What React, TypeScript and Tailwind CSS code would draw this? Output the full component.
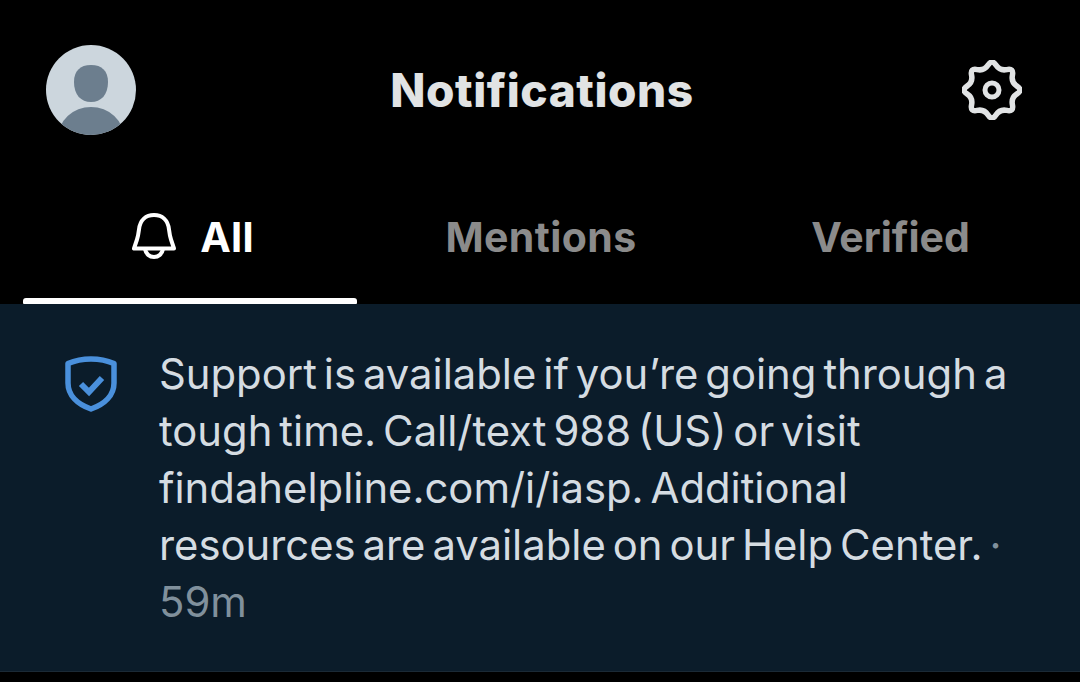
const gearPath = (() => {
  const pts = Array.from({ length: 16 }, (_, i) => {
    const a = (i * Math.PI) / 8 - Math.PI / 2;
    const r = i % 2 === 0 ? 31 : 20.5;
    return [30 + r * Math.cos(a), 30 + r * Math.sin(a)];
  });
  const mid = (p: number[], q: number[]) => [(p[0] + q[0]) / 2, (p[1] + q[1]) / 2];
  const start = mid(pts[15], pts[0]);
  let d = `M${start[0].toFixed(2)} ${start[1].toFixed(2)}`;
  pts.forEach((p, i) => {
    const m = mid(p, pts[(i + 1) % 16]);
    d += `Q${p[0].toFixed(2)} ${p[1].toFixed(2)} ${m[0].toFixed(2)} ${m[1].toFixed(2)}`;
  });
  return d + "Z";
})();

export default function App() {
  return (
    <div className="w-[1080px] h-[682px] overflow-hidden bg-black flex flex-col font-['Inter','Liberation_Sans',sans-serif]">
      <header className="h-[180px] pl-[46px] pr-[58px] flex items-center justify-between shrink-0">
        <svg viewBox="0 0 90 90" className="w-[90px] h-[90px]">
          <defs><clipPath id="av"><circle cx="45" cy="45" r="45" /></clipPath></defs>
          <circle cx="45" cy="45" r="45" fill="#ccd6dd" />
          <g clipPath="url(#av)" fill="#6c7e8e">
            <path d="M45 20c11 0 17 6 17 17 0 13-7 20-17 20s-17-7-17-20c0-11 6-17 17-17z" />
            <ellipse cx="45" cy="93" rx="33" ry="31" />
          </g>
        </svg>
        <h1 className="text-[46px] leading-none font-extrabold tracking-[0.55px] text-[#e1e3e4] mr-[14px]">Notifications</h1>
        <svg viewBox="0 0 60 60" className="w-[60px] h-[60px]" fill="none" stroke="#e1e3e4" strokeWidth="5.5" strokeLinejoin="round">
          <path d={gearPath} />
          <circle cx="30" cy="30" r="7" strokeWidth="5" />
        </svg>
      </header>
      <nav className="h-[124px] px-[15px] grid grid-cols-3 shrink-0">
        <div className="relative flex items-start justify-center pt-[34px] gap-[24px] pl-[6px] text-white">
          <svg viewBox="0 0 44 48" className="w-[44px] h-[48px] -mt-[2px]" fill="none" stroke="#fff" strokeWidth="4" strokeLinejoin="round">
            <path d="M2 36.500h40l-3-9c-1-3-1.500-6-2-10C36 8 30 3 22 3S8 8 7 17.500c-.5 4-1 7-2 10z" />
            <path d="M13 37c1 5 4.500 8 9 8s8-3 9-8" />
          </svg>
          <span className="text-[41px] leading-[47px] font-bold tracking-[0.2px]">All</span>
          <div className="absolute left-[8px] right-[8px] bottom-0 h-[6px] bg-white rounded-t-[3px] rounded-b-[1px]" />
        </div>
        <div className="flex items-start justify-center pt-[34px] pl-[2px] text-[41px] leading-[47px] font-bold tracking-[0.4px] text-[#8b8b8b]">Mentions</div>
        <div className="flex items-start justify-center pt-[34px] pl-[1px] text-[41px] leading-[47px] font-bold tracking-[0px] text-[#8b8b8b]">Verified</div>
      </nav>
      <section className="h-[368px] shrink-0 bg-[#0b1c2a] border-b border-[#1b2a36] pl-[64px] pt-[42px] flex items-start gap-[42px]">
        <svg viewBox="0 0 54 58" className="w-[54px] h-[58px] mt-[9px] shrink-0" fill="none">
          <path d="M27 4c8 0 16 1.500 23 4.500V28c0 12-9 21-23 26C13 49 4 40 4 28V8.500C11 5.500 19 4 27 4z" stroke="#4a90dc" strokeWidth="5.500" strokeLinejoin="round" />
          <path d="M17 29l8 8 13-14" stroke="#4a90dc" strokeWidth="6" />
        </svg>
        <p className="-ml-[1px] w-[870px] text-[41.8px] leading-[57px] font-normal [word-spacing:-4.8px] text-[#d5dce2] whitespace-nowrap">
          Support is available if you’re going through a<br />
          tough time. Call/text 988 (US) or visit<br />
          findahelpline.com/i/iasp. Additional<br />
          resources are available on our Help Center.<span className="text-[#80909c]"> ·</span><br />
          <span className="text-[#80909c]">59m</span>
        </p>
      </section>
    </div>
  );
}
